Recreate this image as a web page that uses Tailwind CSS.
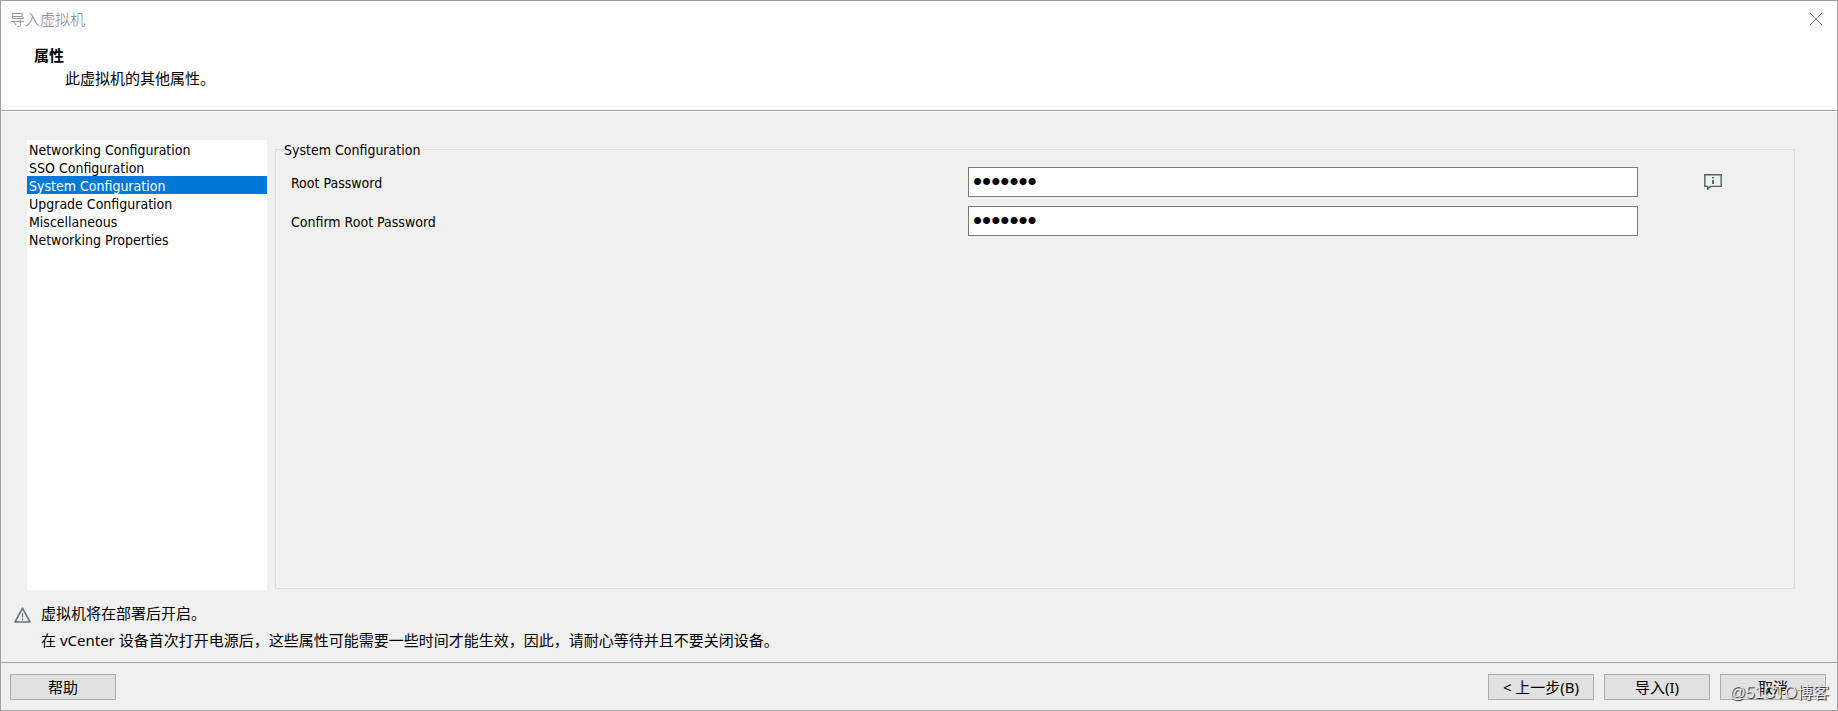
<!DOCTYPE html>
<html lang="zh">
<head>
  <meta charset="UTF-8">
  <meta name="viewport" content="width=device-width, initial-scale=1.0">
  <title>导入虚拟机</title>
  <script src="https://cdn.jsdelivr.net/npm/@tailwindcss/browser@4"></script>
</head>
<body class="font-['Noto_Sans','Noto_Sans_CJK_SC',sans-serif] text-[15px] leading-[18px] text-black">
  <div class="relative flex flex-col min-h-screen bg-[#f0f0f0] border border-[#a0a0a0]">

    <!-- 标题栏 -->
    <header class="bg-white border-b border-[#a0a0a0] pb-5">
      <div class="flex items-center justify-between h-9 pl-[9px] pr-[13px]">
        <h1 class="font-light text-[#808080]">导入虚拟机</h1>
        <button type="button" aria-label="关闭" class="w-4 h-4">
          <svg class="w-4 h-4" viewBox="0 0 16 16" fill="none" stroke="#777" stroke-width="1">
            <path d="M2 2l12 12M14 2L2 14"/>
          </svg>
        </button>
      </div>
      <h2 class="pl-[33px] pt-[7px] font-bold leading-[23px]">属性</h2>
      <p class="pl-16 leading-[23px]">此虚拟机的其他属性。</p>
    </header>

    <!-- 属性分类和表单 -->
    <main class="flex flex-1 border-t border-white pt-7 pl-[26px] pr-[42px] font-['DejaVu_Sans_Condensed','DejaVu_Sans',sans-serif] text-[14px] leading-5">
      <ul class="w-60 shrink-0 bg-white">
        <li><a href="#" class="block pl-[2px] h-[18px]">Networking Configuration</a></li>
        <li><a href="#" class="block pl-[2px] h-[18px]">SSO Configuration</a></li>
        <li><a href="#" class="block pl-[2px] h-[18px] bg-[#0078d7] text-white">System Configuration</a></li>
        <li><a href="#" class="block pl-[2px] h-[18px]">Upgrade Configuration</a></li>
        <li><a href="#" class="block pl-[2px] h-[18px]">Miscellaneous</a></li>
        <li><a href="#" class="block pl-[2px] h-[18px]">Networking Properties</a></li>
      </ul>

      <fieldset class="flex-1 ml-2 mb-px border border-[#dcdcdc] pl-2">
        <legend class="h-[18px] pr-1">System Configuration</legend>
        <div class="grid grid-cols-[677fr_670fr_156px] items-center gap-y-[9px] pl-[7px] pt-[9px]">
          <label for="root-password" class="pt-px">Root Password</label>
          <input id="root-password" type="password" value="1234567" class="w-full h-[30px] bg-white border border-[#7a7a7a] px-1 pb-[2px] font-['Liberation_Sans'] text-[26px] leading-[26px]">
          <button type="button" aria-label="信息" class="ml-[66px] w-[18px] h-4">
            <svg class="w-[18px] h-4" viewBox="0 0 18 16" fill="none">
              <path d="M.8 .8h16.4v11.6H6.4L3.6 15.2V12.4H.8z" fill="#eaf1f3" stroke="#565f66" stroke-width="1.4"/>
              <path d="M9 3v1.6M9 6v4" stroke="#3f474d" stroke-width="1.6"/>
            </svg>
          </button>
          <label for="confirm-password" class="pt-px">Confirm Root Password</label>
          <input id="confirm-password" type="password" value="1234567" class="w-full h-[30px] bg-white border border-[#7a7a7a] px-1 pb-[2px] font-['Liberation_Sans'] text-[26px] leading-[26px]">
        </div>
      </fieldset>
    </main>

    <!-- 提示信息 -->
    <section class="flex gap-[10px] pl-[13px] pt-[10px] pb-2">
      <svg class="w-[17px] h-4 mt-[7px] shrink-0" viewBox="0 0 17 16" fill="none">
        <path d="M8.5 1.2L16 15H1z" stroke="#6b747b" stroke-width="1.6" stroke-linejoin="round"/>
        <path d="M8.5 6v4.4M8.5 11.6v1.6" stroke="#6b747b" stroke-width="1.3"/>
      </svg>
      <div class="leading-[27px]">
        <p>虚拟机将在部署后开启。</p>
        <p>在 vCenter 设备首次打开电源后，这些属性可能需要一些时间才能生效，因此，请耐心等待并且不要关闭设备。</p>
      </div>
    </section>

    <!-- 底部按钮 -->
    <footer class="flex items-center gap-[10px] h-12 border-t border-[#a0a0a0] pl-[9px] pr-[11px]">
      <button type="button" class="w-[106px] h-[26px] mr-auto bg-[#e1e1e1] border border-[#adadad]">帮助</button>
      <button type="button" class="w-[106px] h-[26px] bg-[#e1e1e1] border border-[#adadad]">&lt; 上一步(B)</button>
      <button type="button" class="w-[106px] h-[26px] bg-[#e1e1e1] border border-[#adadad]">导入(I)</button>
      <button type="button" class="w-[106px] h-[26px] bg-[#e1e1e1] border border-[#adadad]">取消</button>
    </footer>

    <!-- 水印 -->
    <span class="absolute right-2 bottom-2 font-['Liberation_Sans','Noto_Sans_CJK_SC',sans-serif] text-[16px] text-[#e8e8e8] [text-shadow:1px_1px_1px_#222] pointer-events-none">@51CTO博客</span>
  </div>
</body>
</html>
